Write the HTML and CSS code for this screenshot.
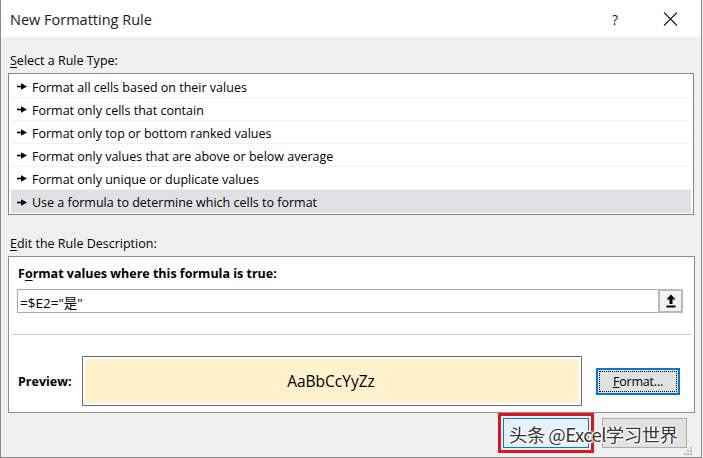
FILE: index.html
```html
<!DOCTYPE html>
<html>
<head>
<meta charset="utf-8">
<link rel="stylesheet" href="styles.css">
</head>
<body>
<div class="window">
  <div class="titlebar">
    <span class="title">New Formatting Rule</span>
    <span class="help">?</span>
    <svg class="close" width="15" height="14" viewBox="0 0 15 14"><path d="M1 0.5 L14 13.5 M14 0.5 L1 13.5" stroke="#1a1a1a" stroke-width="1.1" fill="none"/></svg>
  </div>
  <div class="content">
    <div class="label"><u>S</u>elect a Rule Type:</div>
    <div class="listbox">
      <div class="row"><svg class="arrow" width="10" height="7" viewBox="0 0 10 7"><rect x="0" y="2.7" width="5" height="1.6" fill="#000"/><polygon points="4,0.3 10,3.5 4,6.7" fill="#000"/></svg><span>Format all cells based on their values</span></div>
      <div class="row"><svg class="arrow" width="10" height="7" viewBox="0 0 10 7"><rect x="0" y="2.7" width="5" height="1.6" fill="#000"/><polygon points="4,0.3 10,3.5 4,6.7" fill="#000"/></svg><span>Format only cells that contain</span></div>
      <div class="row"><svg class="arrow" width="10" height="7" viewBox="0 0 10 7"><rect x="0" y="2.7" width="5" height="1.6" fill="#000"/><polygon points="4,0.3 10,3.5 4,6.7" fill="#000"/></svg><span>Format only top or bottom ranked values</span></div>
      <div class="row"><svg class="arrow" width="10" height="7" viewBox="0 0 10 7"><rect x="0" y="2.7" width="5" height="1.6" fill="#000"/><polygon points="4,0.3 10,3.5 4,6.7" fill="#000"/></svg><span>Format only values that are above or below average</span></div>
      <div class="row"><svg class="arrow" width="10" height="7" viewBox="0 0 10 7"><rect x="0" y="2.7" width="5" height="1.6" fill="#000"/><polygon points="4,0.3 10,3.5 4,6.7" fill="#000"/></svg><span>Format only unique or duplicate values</span></div>
      <div class="row selected"><svg class="arrow" width="10" height="7" viewBox="0 0 10 7"><rect x="0" y="2.7" width="5" height="1.6" fill="#000"/><polygon points="4,0.3 10,3.5 4,6.7" fill="#000"/></svg><span>Use a formula to determine which cells to format</span></div>
    </div>
    <div class="label label2"><u>E</u>dit the Rule Description:</div>
    <div class="panel">
      <div class="heading">F<u>o</u>rmat values where this formula is true:</div>
      <div class="input">
        <span class="formula">=$E2="是"</span>
        <span class="collapse"><svg width="10" height="14" viewBox="0 0 10 14"><polygon points="5,0.5 9.5,5.5 6.5,5.5 6.5,10 3.5,10 3.5,5.5 0.5,5.5" fill="#000"/><rect x="0.5" y="11.5" width="9" height="2" fill="#000"/></svg></span>
      </div>
      <div class="sep"></div>
      <div class="preview-row">
        <span class="preview-label">Preview:</span>
        <div class="preview-box"><div class="preview-fill">AaBbCcYyZz</div></div>
        <div class="fmt-btn"><span class="fmt-inner"><u>F</u>ormat...</span></div>
      </div>
    </div>
    <div class="footer">
      <div class="mark"><div class="btn ok"></div></div>
      <div class="btn cancel"></div>
      <div class="watermark">头条 @Excel学习世界</div>
      <svg class="grip" width="9" height="9" viewBox="0 0 9 9"><g fill="#b8b8b8"><rect x="6" y="0" width="2" height="2"/><rect x="3" y="3" width="2" height="2"/><rect x="6" y="3" width="2" height="2"/><rect x="0" y="6" width="2" height="2"/><rect x="3" y="6" width="2" height="2"/><rect x="6" y="6" width="2" height="2"/></g></svg>
    </div>
  </div>
</div>
</body>
</html>
```
FILE: styles.css
```css
* { box-sizing: border-box; }
html, body { margin: 0; padding: 0; }
body {
  width: 703px;
  height: 458px;
  overflow: hidden;
  background: #f0f0f0;
  font-family: "Open Sans", "Noto Sans", "Noto Sans CJK SC", sans-serif;
  color: #000;
}
.window {
  width: 702px;
  height: 458px;
  border-left: 1px solid #8a8a8a;
  border-right: 1px solid #8a8a8a;
  border-bottom: 1px solid #8a8a8a;
  background: #f0f0f0;
  display: flex;
  flex-direction: column;
}
.titlebar {
  height: 37px;
  background: #fff;
  display: flex;
  align-items: center;
  padding-left: 9px;
  flex-shrink: 0;
}
.title {
  font-size: 14.5px;
  color: #1a1a1a;
  flex: 1;
  margin-top: 1px;
}
.help {
  font-size: 14px;
  color: #1a1a1a;
  margin-right: 45px;
  margin-top: 1px;
}
.close { margin-right: 23px; margin-top: 1px; }

.content {
  flex: 1;
  padding: 0 7px 0 7px;
  display: flex;
  flex-direction: column;
  position: relative;
}
.label {
  font-size: 12.5px;
  height: 16px;
  line-height: 16px;
  margin-top: 16px;
  padding-left: 2px;
  color: #000;
}
.label u { text-decoration-thickness: 1px; text-underline-offset: 2px; }
.label2 { margin-top: 21px; }

.listbox {
  margin-top: 4px;
  width: 686px;
  border: 1px solid #828790;
  background: #fff;
  padding: 1px 2px;
}
.row {
  height: 23px;
  display: flex;
  align-items: center;
  padding-left: 6px;
  padding-top: 2px;
  font-size: 12.5px;
  border-bottom: 1px solid #f0f0f0;
}
.row:last-child { border-bottom: none; }
.row.selected { background: #e1e0e5; }
.arrow { margin-right: 5px; flex-shrink: 0; margin-top: -1px; }

.panel {
  margin-top: 4px;
  width: 687px;
  height: 157px;
  border: 1px solid #8f8f8f;
  background: #fff;
  display: flex;
  flex-direction: column;
  padding: 0 11px 0 8px;
}
.heading {
  font-size: 12.5px;
  font-weight: bold;
  margin-top: 9px;
  height: 16px;
  line-height: 16px;
  padding-left: 1px;
}
.heading u { text-underline-offset: 2px; }
.input {
  margin-top: 7px;
  height: 24px;
  border: 1px solid #acacac;
  display: flex;
  align-items: center;
  justify-content: space-between;
}
.formula {
  font-size: 13.5px;
  padding-left: 2px;
  padding-top: 1px;
}
.collapse {
  width: 25px;
  height: 24px;
  margin: -1px -1px -1px 0;
  border: 2px solid #b9b9b9;
  background: #f3f3f3;
  display: flex;
  align-items: center;
  justify-content: center;
}
.sep {
  margin: 21px -9px 0 -6px;
  height: 1px;
  background: #cfcfcf;
}
.preview-row {
  display: flex;
  align-items: center;
  margin-top: 21px;
}
.preview-label {
  font-size: 12.5px;
  font-weight: bold;
  width: 65px;
  padding-left: 1px;
}
.preview-box {
  width: 500px;
  height: 50px;
  border: 1px solid #707070;
  padding: 2px;
  background: #fff;
}
.preview-fill {
  height: 100%;
  background: #fff2cc;
  display: flex;
  align-items: center;
  justify-content: center;
  font-size: 15.5px;
  padding-right: 2px;
}
.fmt-btn {
  margin-left: 14px;
  width: 84px;
  height: 27px;
  border: 2px solid #0078d7;
  background: #e1e1e1;
  padding: 1px;
}
.fmt-inner {
  display: flex;
  height: 100%;
  align-items: center;
  justify-content: center;
  border: 1px dotted #000;
  font-size: 12.5px;
  letter-spacing: -0.2px;
}

.footer {
  display: flex;
  align-items: flex-start;
  margin-top: 0;
  padding-left: 490px;
  position: relative;
  flex: 1;
}
.mark {
  border: 3px solid #e0141e;
  padding: 2px;
  width: 96px;
  height: 40px;
}
.btn {
  width: 86px;
  height: 30px;
}
.ok { border: 1px solid #0078d7; background: #e5f1fb; }
.cancel { margin-top: 5px; margin-left: 8px; border: 1px solid #adadad; background: #e1e1e1; width: 85px; }
.watermark {
  position: absolute;
  left: 501px;
  top: 9px;
  font-family: "Noto Sans CJK SC", "Liberation Sans", sans-serif;
  font-size: 18.5px;
  line-height: 24px;
  color: #363636;
  letter-spacing: -0.6px;
  text-shadow: 0 0 2px #fff, 0 0 2px #fff, 0 0 3px #fff, 1px 1px 1px #fff, -1px -1px 1px #fff;
  white-space: nowrap;
}
.grip {
  position: absolute;
  right: 1px;
  bottom: 1px;
}
```
